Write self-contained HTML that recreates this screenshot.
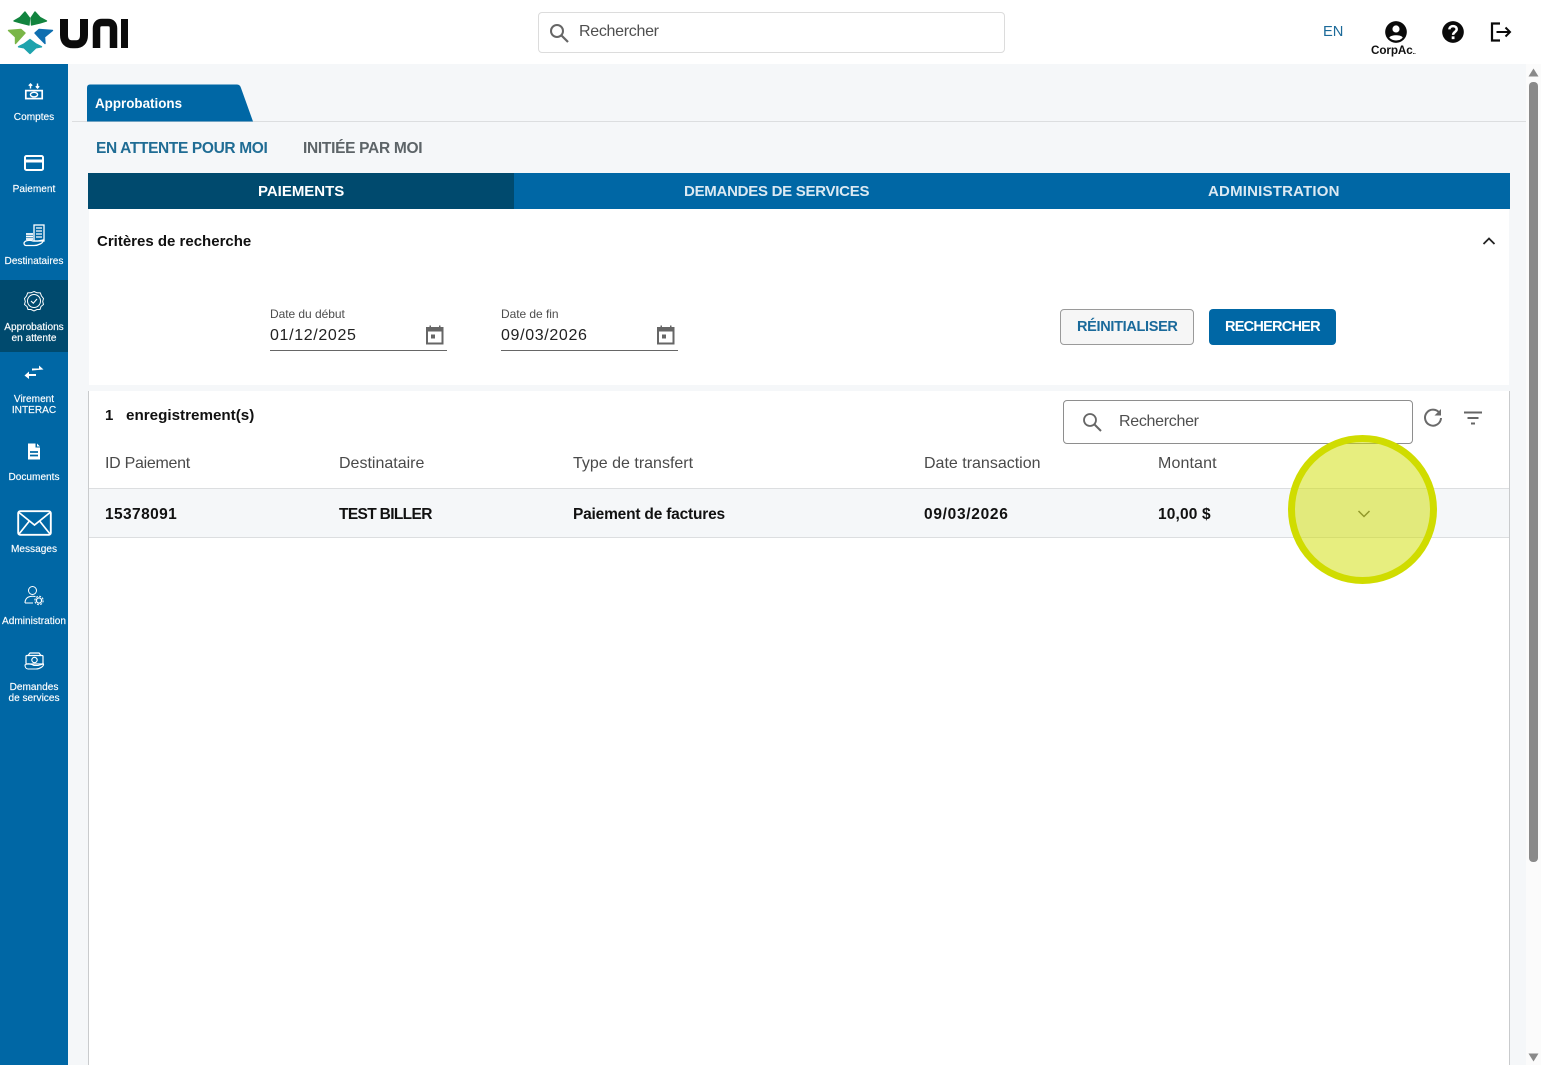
<!DOCTYPE html>
<html lang="fr"><head><meta charset="utf-8"><title>Approbations</title>
<style>
html,body{margin:0;padding:0}
body{width:1541px;height:1065px;position:relative;overflow:hidden;background:#f5f7f9;font-family:"Liberation Sans",sans-serif;color:#111}
div,span,svg{position:absolute}
.t{white-space:nowrap;line-height:20px}
.nav{left:0;width:68px;text-align:center;color:#fff;font-size:10.1px;line-height:10.5px;white-space:nowrap;-webkit-text-stroke:.15px #fff}
.ic{fill:none;stroke:#fff;stroke-width:1.3}
.hd{font-size:16px;color:#4a4a4a;top:454px}
.cell{font-size:15.5px;font-weight:bold;top:505px;color:#111}
.tab{font-size:15px;font-weight:bold;color:#fff;top:182px;letter-spacing:-.02px}
</style></head><body>

<div style="left:0;top:0;width:1541px;height:64px;background:#fff"></div>

<!-- logo -->
<svg style="left:0;top:0" width="140" height="64" viewBox="0 0 140 64">
<g stroke-width="1.400" stroke-linejoin="round">
<polygon points="25,12 29.500,18 29,25 21,23 14,21 20,17.500" fill="#12843f" stroke="#12843f"/>
<polygon points="35,12 31,18 31.500,25 40,23 46.500,21 40,17.500" fill="#12843f" stroke="#12843f"/>
<polygon points="8.500,30.500 21,29.500 25,33 20,38.500 15.500,43.500 15.500,37" fill="#7ab648" stroke="#7ab648"/>
<polygon points="52.500,30.500 39,29.500 35,33 40,38.500 45,43.500 44.500,37" fill="#0f6fb0" stroke="#0f6fb0"/>
<polygon points="30,39.500 36,44 41.500,46.800 36,47.800 30,53.500 24,47.800 18.500,46.800 24,44" fill="#1ea3ad" stroke="#1ea3ad"/>
</g>
<path d="M64 19V35Q64 44.300 73 44.300H75Q84 44.300 84 35V19" fill="none" stroke="#0b0b0b" stroke-width="8"/>
<path d="M96.500 48V28.500Q96.500 22.500 102 22.500H108Q113.500 22.500 113.500 28.500V48" fill="none" stroke="#0b0b0b" stroke-width="7.500"/>
<rect x="121" y="19" width="7" height="29" fill="#0b0b0b"/>
</svg>

<!-- top search -->
<div style="left:538px;top:12px;width:465px;height:39px;background:#fff;border:1px solid #dcdcdc;border-radius:4px"></div>
<svg style="left:547px;top:21px" width="24" height="24" viewBox="0 0 24 24"><circle cx="10" cy="10" r="6" fill="none" stroke="#666" stroke-width="2"/><path d="M14.500 14.500L21 21" stroke="#666" stroke-width="2.200"/></svg>
<span class="t" style="left:579px;top:22px;font-size:16px;letter-spacing:-.3px;color:#4f4f4f">Rechercher</span>

<span class="t" style="left:1323px;top:22px;font-size:14.700px;color:#1c6a99">EN</span>
<svg style="left:1383px;top:19px" width="26" height="26" viewBox="0 0 24 24"><circle cx="12" cy="12" r="10" fill="#0a0a0a"/><circle cx="12" cy="9.200" r="3.300" fill="#fff"/><path d="M5.800 17.200C7 14.300 17 14.300 18.200 17.200C16.500 19 14.500 19.800 12 19.800C9.500 19.800 7.500 19 5.800 17.200Z" fill="#fff"/></svg>
<span class="t" style="left:1371px;top:41px;font-size:11.700px;font-weight:bold;letter-spacing:-.1px;color:#111">CorpAc<span style="position:static;font-size:6px">..</span></span>
<svg style="left:1440px;top:19px" width="26" height="26" viewBox="0 0 24 24"><circle cx="12" cy="12" r="10" fill="#0a0a0a"/><path d="M8.700 9.600C8.700 5.600 15.400 5.600 15.400 9.500C15.400 12 12.100 12 12.100 14.600" fill="none" stroke="#fff" stroke-width="2.300"/><rect x="10.800" y="16" width="2.600" height="2.600" fill="#fff"/></svg>
<svg style="left:1489px;top:20px" width="24" height="24" viewBox="0 0 24 24"><path d="M11 3.500H3V20.500H11" fill="none" stroke="#0a0a0a" stroke-width="2.200"/><path d="M7.500 12H21M16.500 7.500L21 12L16.500 16.500" fill="none" stroke="#0a0a0a" stroke-width="2"/></svg>

<!-- sidebar -->
<div style="left:0;top:64px;width:68px;height:1001px;background:#0067a5"></div>
<div style="left:0;top:280px;width:68px;height:72px;background:#004a6e"></div>

<svg class="ic" style="left:24px;top:82px" width="20" height="18" viewBox="0 0 20 18"><rect x="1.800" y="8.600" width="16.400" height="8" stroke-width="1.700"/><ellipse cx="10" cy="12.600" rx="3.600" ry="2.300" stroke-width="1.400"/><path d="M6.500 6.500V2M4.800 3.700L6.500 2L8.200 3.700M13.500 1.500V6M11.800 4.300L13.500 6L15.200 4.300" stroke-width="1.400"/></svg>
<div class="nav" style="top:113px">Comptes</div>

<svg style="left:24px;top:154px" width="20" height="18" viewBox="0 0 20 18"><rect x="1" y="2" width="18" height="14" rx="1.500" fill="none" stroke="#fff" stroke-width="2"/><rect x="1" y="5.500" width="18" height="3" fill="#fff"/></svg>
<div class="nav" style="top:185px">Paiement</div>

<svg class="ic" style="left:23px;top:224px" width="23" height="23" viewBox="0 0 23 23"><rect x="11" y="1" width="10" height="16"/><path d="M13 4H19M13 7H19M13 10H19M13 13H19" stroke-width="1.200"/><path d="M3 10H10M3 12.500H10M3 15H10" stroke-width="1.800"/><path d="M1 19C2 16 7 16 10 17H15L20 16C21 19 15 21.500 11 21.500H3C1.500 21.500 1 20 1 19Z"/></svg>
<div class="nav" style="top:257px">Destinataires</div>

<svg class="ic" style="left:23px;top:290px" width="22" height="22" viewBox="0 0 22 22"><path d="M11 1.500L14 2.800L17.300 2.900L18.500 6L20.500 8.500L19.700 11.500L20.500 14.500L18 16.500L17 19.500L14 19.500L11 21L8 19.500L5 19.500L4 16.500L1.500 14.500L2.300 11.500L1.500 8.500L3.500 6L4.700 2.900L8 2.800Z" stroke-width="1"/><circle cx="11" cy="11" r="6.500" stroke-width="1"/><path d="M8 11L10.300 13.200L14 9" stroke-width="1.100"/></svg>
<div class="nav" style="top:323px">Approbations<br>en attente</div>

<svg style="left:24px;top:364px" width="20" height="17" viewBox="0 0 20 17"><polygon points="8,4.500 15,4.500 15,1.500 19.500,5.500 8,6.500" fill="#fff"/><polygon points="12,10 5,10 5,7.500 .5,11.500 5,15 5,12 12,12" fill="#fff"/></svg>
<div class="nav" style="top:395px">Virement<br>INTERAC</div>

<svg style="left:27px;top:443px" width="14" height="17" viewBox="0 0 14 17"><path d="M1 .5H8.500V4.500H13V16.500H1Z" fill="#fff"/><path d="M10 .5L13 3.500H10Z" fill="#fff"/><path d="M3 9H11M3 12.500H11" stroke="#0067a5" stroke-width="1.700"/></svg>
<div class="nav" style="top:473px">Documents</div>

<svg style="left:17px;top:510px" width="35" height="26" viewBox="0 0 35 26"><rect x="1.200" y="1.200" width="32.600" height="23.600" rx="2" fill="none" stroke="#fff" stroke-width="1.900"/><path d="M2 2.500L17.500 15L33 2.500M2 24L12 11.500M33 24L23 11.500" fill="none" stroke="#fff" stroke-width="1.700"/></svg>
<div class="nav" style="top:545px">Messages</div>

<svg class="ic" style="left:24px;top:585px" width="21" height="21" viewBox="0 0 21 21"><circle cx="8.500" cy="5.500" r="4" stroke-width="1"/><path d="M1 18C1 12 6 10.500 11.500 11.500M1 18H9" stroke-width="1"/><circle cx="15" cy="15.500" r="2.600" stroke-width="1.300"/><circle cx="15" cy="15.500" r="4.200" stroke-width="1" stroke-dasharray="2 1.300"/></svg>
<div class="nav" style="top:617px">Administration</div>

<svg class="ic" style="left:24px;top:652px" width="21" height="18" viewBox="0 0 21 18"><path d="M4 3.500L6 1H15L17 3.500" stroke-width="1.200"/><rect x="2" y="3.500" width="17" height="8.500" rx="1" stroke-width="1.200"/><circle cx="10.500" cy="8" r="2.700" stroke-width="1.100"/><path d="M1 13C3 11 7 12 10 13.500H14L19.500 12C20 14 16 17 12 17H4C2 17 1 15 1 13Z" stroke-width="1.100"/></svg>
<div class="nav" style="top:683px">Demandes<br>de services</div>

<!-- approbations tab -->
<div style="left:72px;top:121px;width:1454px;height:1px;background:#dcdee0"></div>
<svg style="left:87px;top:84px" width="167" height="38" viewBox="0 0 167 38"><path d="M0 37.500V4Q0 .5 3 .5H150Q153 .5 154 4L166 37.500Z" fill="#0067a5"/></svg>
<span class="t" style="left:95px;top:94px;font-size:13.400px;font-weight:bold;color:#fff">Approbations</span>

<span class="t" style="left:96px;top:139px;font-size:15.500px;font-weight:bold;letter-spacing:-.36px;color:#1f6c94">EN ATTENTE POUR MOI</span>
<span class="t" style="left:303px;top:139px;font-size:15.500px;font-weight:bold;letter-spacing:-.3px;color:#5d6468">INITIÉE PAR MOI</span>

<!-- main tabs -->
<div style="left:88px;top:173px;width:1422px;height:36px;background:#0067a5"></div>
<div style="left:88px;top:173px;width:426px;height:36px;background:#004a6e"></div>
<span class="t tab" style="left:258px">PAIEMENTS</span>
<span class="t tab" style="left:684px;color:#dbe9f2;letter-spacing:-.27px">DEMANDES DE SERVICES</span>
<span class="t tab" style="left:1208px;color:#dbe9f2;letter-spacing:.2px">ADMINISTRATION</span>

<!-- criteria panel -->
<div style="left:89px;top:209px;width:1420px;height:176px;background:#fff"></div>
<span class="t" style="left:97px;top:232px;font-size:15px;font-weight:bold;color:#111">Critères de recherche</span>
<svg style="left:1481px;top:233px" width="16" height="16" viewBox="0 0 16 16"><path d="M2.500 11L8 5.500L13.500 11" fill="none" stroke="#222" stroke-width="1.800"/></svg>

<span class="t" style="left:270px;top:304px;font-size:12px;letter-spacing:-.05px;color:#4d4d4d">Date du début</span>
<span class="t" style="left:270px;top:326px;font-size:16px;letter-spacing:.65px;color:#222">01/12/2025</span>
<div style="left:270px;top:350px;width:177px;height:1px;background:#666"></div>
<svg style="left:424px;top:324px" width="22" height="22" viewBox="0 0 22 22"><path d="M3 3H5.500V1.500H7V3H15V1.500H16.500V3H19.500V20.500H2V3Z" fill="#666"/><rect x="4" y="7.500" width="13.500" height="11" fill="#fff"/><rect x="7" y="10.500" width="4" height="4" fill="#666"/></svg>

<span class="t" style="left:501px;top:304px;font-size:12px;letter-spacing:-.05px;color:#4d4d4d">Date de fin</span>
<span class="t" style="left:501px;top:326px;font-size:16px;letter-spacing:.65px;color:#222">09/03/2026</span>
<div style="left:501px;top:350px;width:177px;height:1px;background:#666"></div>
<svg style="left:655px;top:324px" width="22" height="22" viewBox="0 0 22 22"><path d="M3 3H5.500V1.500H7V3H15V1.500H16.500V3H19.500V20.500H2V3Z" fill="#666"/><rect x="4" y="7.500" width="13.500" height="11" fill="#fff"/><rect x="7" y="10.500" width="4" height="4" fill="#666"/></svg>

<div style="left:1060px;top:309px;width:132px;height:34px;background:#f6f6f6;border:1px solid #9a9a9a;border-radius:4px"></div>
<span class="t" style="left:1077px;top:317px;font-size:14.500px;font-weight:bold;letter-spacing:-.32px;color:#1a6a9b">RÉINITIALISER</span>
<div style="left:1209px;top:309px;width:127px;height:36px;background:#0067a5;border-radius:4px"></div>
<span class="t" style="left:1225px;top:317px;font-size:14.500px;font-weight:bold;letter-spacing:-.75px;color:#fff">RECHERCHER</span>

<!-- results panel -->
<div style="left:88px;top:391px;width:1420px;height:674px;background:#fff;border-left:1px solid #c9cbcd;border-right:1px solid #c9cbcd"></div>
<span class="t" style="left:105px;top:406px;font-size:15px;font-weight:bold;color:#111">1</span>
<span class="t" style="left:126px;top:406px;font-size:15.200px;font-weight:bold;color:#111">enregistrement(s)</span>

<div style="left:1063px;top:400px;width:348px;height:42px;background:#fff;border:1px solid #8e8e8e;border-radius:4px"></div>
<svg style="left:1080px;top:410px" width="24" height="24" viewBox="0 0 24 24"><circle cx="10" cy="10" r="6" fill="none" stroke="#666" stroke-width="1.800"/><path d="M14.500 14.500L21 21" stroke="#666" stroke-width="2"/></svg>
<span class="t" style="left:1119px;top:412px;font-size:16px;letter-spacing:-.3px;color:#4f4f4f">Rechercher</span>
<svg style="left:1421px;top:406px" width="24" height="24" viewBox="0 0 24 24"><path d="M18.500 7A8 8 0 1 0 20 12" fill="none" stroke="#6a6a6a" stroke-width="2"/><polygon points="20,3 20,9.500 13.500,9.500" fill="#6a6a6a"/></svg>
<svg style="left:1461px;top:406px" width="24" height="24" viewBox="0 0 24 24"><path d="M3 6.500H21M6.500 12H17.500M10 17.500H14" stroke="#666" stroke-width="2"/></svg>

<span class="t hd" style="left:105px;letter-spacing:-.28px">ID Paiement</span>
<span class="t hd" style="left:339px">Destinataire</span>
<span class="t hd" style="left:573px">Type de transfert</span>
<span class="t hd" style="left:924px">Date transaction</span>
<span class="t hd" style="left:1158px;letter-spacing:.12px">Montant</span>

<div style="left:89px;top:488px;width:1420px;height:48px;background:#f5f7f9;border-top:1px solid #dcdee0;border-bottom:1px solid #dcdee0"></div>
<span class="t cell" style="left:105px;letter-spacing:.4px">15378091</span>
<span class="t cell" style="left:339px;letter-spacing:-.65px">TEST BILLER</span>
<span class="t cell" style="left:573px;letter-spacing:-.2px">Paiement de factures</span>
<span class="t cell" style="left:924px;letter-spacing:.7px">09/03/2026</span>
<span class="t cell" style="left:1158px;letter-spacing:.15px">10,00 $</span>
<svg style="left:1356px;top:506px" width="16" height="16" viewBox="0 0 16 16"><path d="M2.500 5L8 10.500L13.500 5" fill="none" stroke="#555" stroke-width="1.500"/></svg>

<!-- highlight -->
<div style="left:1288px;top:435px;width:149px;height:149px;box-sizing:border-box;border-radius:50%;background:rgba(208,222,0,.5);border:7px solid #d0dc00"></div>

<!-- scrollbar -->
<div style="left:1526px;top:64px;width:15px;height:1001px;background:#fbfbfb"></div>
<svg style="left:1527px;top:68px" width="13" height="9" viewBox="0 0 13 9"><polygon points="6.500,.5 11.500,8.500 1.500,8.500" fill="#8a8a8a"/></svg>
<div style="left:1529px;top:82px;width:9px;height:780px;background:#8a8a8a;border-radius:4px"></div>
<svg style="left:1527px;top:1053px" width="13" height="9" viewBox="0 0 13 9"><polygon points="1.500,.5 11.500,.5 6.500,8.500" fill="#8a8a8a"/></svg>

</body></html>
